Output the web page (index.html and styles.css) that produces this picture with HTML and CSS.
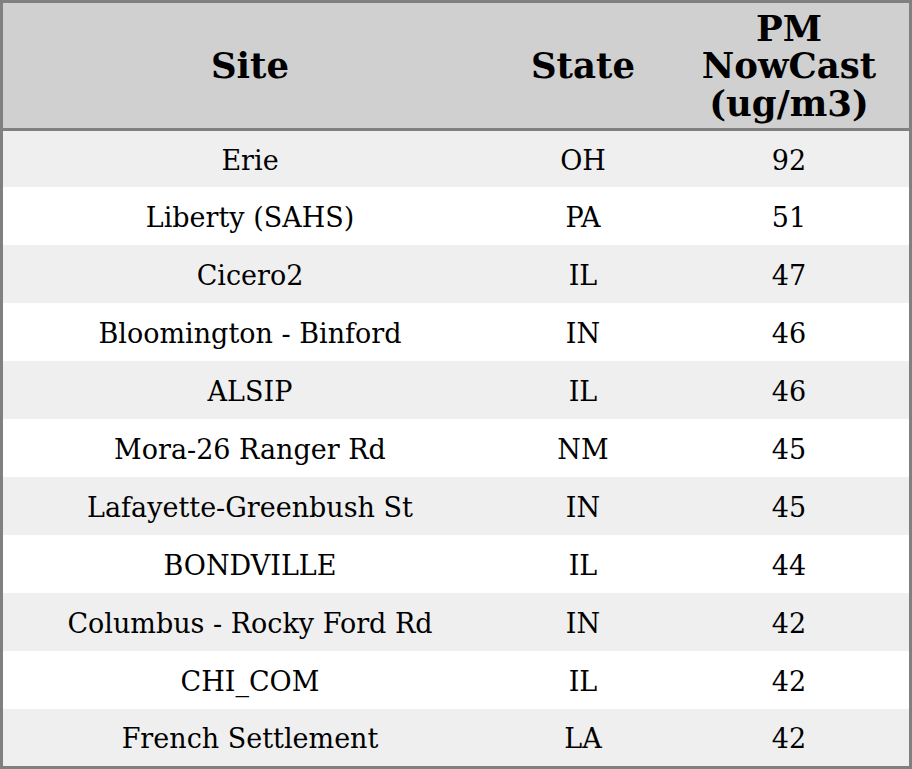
FILE: index.html
```html
<!DOCTYPE html>
<html>
<head>
<meta charset="utf-8">
<link rel="stylesheet" href="styles.css">
</head>
<body>
<div class="table">
  <div class="row head">
    <div class="cell">Site</div>
    <div class="cell">State</div>
    <div class="cell">PM<br>NowCast<br>(ug/m3)</div>
  </div>
  <div class="row odd first"><div class="cell">Erie</div><div class="cell">OH</div><div class="cell">92</div></div>
  <div class="row"><div class="cell">Liberty (SAHS)</div><div class="cell">PA</div><div class="cell">51</div></div>
  <div class="row odd"><div class="cell">Cicero2</div><div class="cell">IL</div><div class="cell">47</div></div>
  <div class="row"><div class="cell">Bloomington - Binford</div><div class="cell">IN</div><div class="cell">46</div></div>
  <div class="row odd"><div class="cell">ALSIP</div><div class="cell">IL</div><div class="cell">46</div></div>
  <div class="row"><div class="cell">Mora-26 Ranger Rd</div><div class="cell">NM</div><div class="cell">45</div></div>
  <div class="row odd"><div class="cell">Lafayette-Greenbush St</div><div class="cell">IN</div><div class="cell">45</div></div>
  <div class="row"><div class="cell">BONDVILLE</div><div class="cell">IL</div><div class="cell">44</div></div>
  <div class="row odd"><div class="cell">Columbus - Rocky Ford Rd</div><div class="cell">IN</div><div class="cell">42</div></div>
  <div class="row"><div class="cell">CHI_COM</div><div class="cell">IL</div><div class="cell">42</div></div>
  <div class="row odd last"><div class="cell">French Settlement</div><div class="cell">LA</div><div class="cell">42</div></div>
</div>
</body>
</html>
```
FILE: styles.css
```css
html, body {
  margin: 0;
  padding: 0;
  background: #ffffff;
}
.table {
  width: 912px;
  height: 769px;
  box-sizing: border-box;
  border: 3px solid #808080;
  font-family: "DejaVu Serif", serif;
  color: #000;
  display: flex;
  flex-direction: column;
}
.row {
  display: grid;
  grid-template-columns: 494px 172px 240px;
  height: 58px;
  background: #ffffff;
  font-size: 27px;
}
.row.odd { background: #efefef; }
.row.first { height: 56px; }
.row.last { height: 57px; }
.row.head {
  height: 128px;
  box-sizing: border-box;
  background: #d0d0d0;
  border-bottom: 3px solid #808080;
  font-weight: bold;
  font-size: 35.5px;
  line-height: 37.5px;
}
.cell {
  display: flex;
  align-items: center;
  justify-content: center;
  text-align: center;
  white-space: nowrap;
  padding-top: 2px;
}
.head .cell {
  padding-top: 1px;
}
```
